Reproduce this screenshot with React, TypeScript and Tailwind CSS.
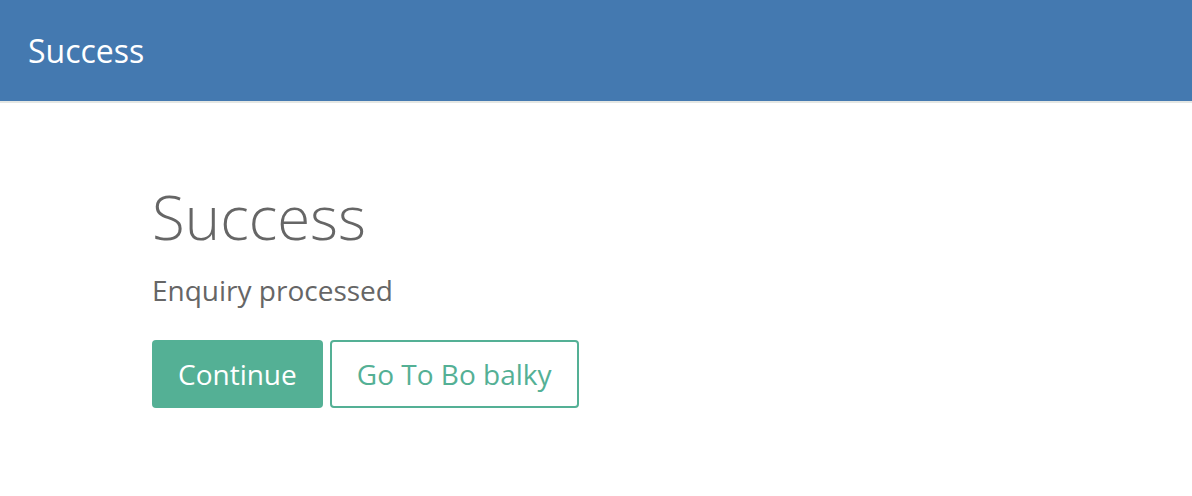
export default function App() {
  return (
    <div className="min-h-[496px] bg-white" style={{ fontFamily: '"Open Sans", sans-serif' }}>
      <header className="h-[103px] bg-[#4479b0] border-b-2 border-[#e4e7e4] flex items-center px-[28px]">
        <span className="text-white text-[32px] leading-none">Success</span>
      </header>
      <main className="pl-[152px] pt-[84px]">
        <h1 className="text-[60px] font-light text-[#666666] leading-none">Success</h1>
        <p className="mt-[29px] text-[28px] text-[#666666] leading-none">Enquiry processed</p>
        <div className="mt-[36px] flex gap-[7px]">
          <button className="h-[68px] px-[26px] rounded-[4px] bg-[#54b095] text-white text-[28px]">Continue</button>
          <button className="h-[68px] px-[25px] rounded-[4px] border-2 border-[#54b095] text-[#54b095] text-[28px] bg-white">Go To Bo balky</button>
        </div>
      </main>
    </div>
  );
}
